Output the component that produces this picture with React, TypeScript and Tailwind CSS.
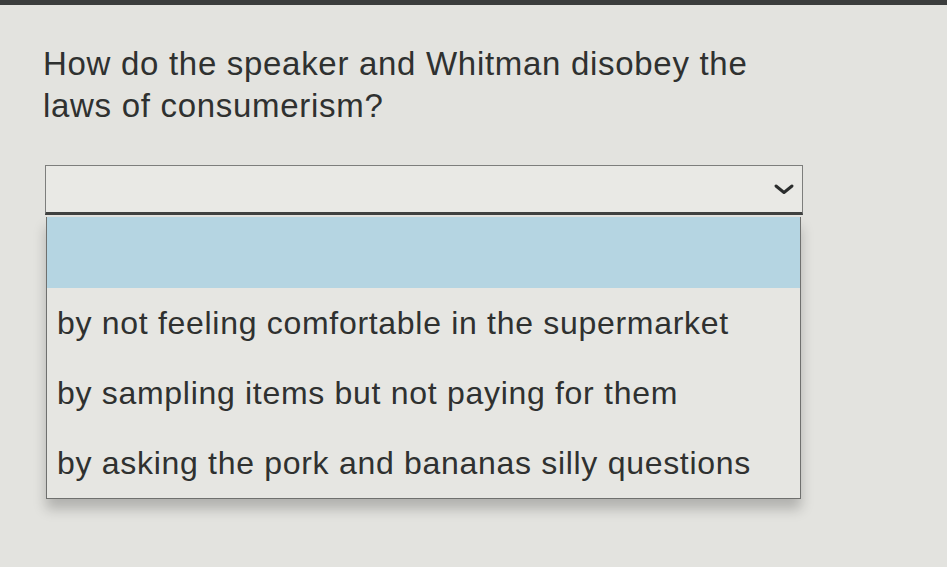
import { useState } from "react";

const options = [
  "",
  "by not feeling comfortable in the supermarket",
  "by sampling items but not paying for them",
  "by asking the pork and bananas silly questions",
];

export default function App() {
  const [selected] = useState(0);

  return (
    <div
      className="w-[947px] h-[567px] overflow-hidden bg-[#e3e3df] text-[#2f3130]"
      style={{ fontFamily: '"Liberation Sans", Arial, sans-serif' }}
    >
      {/* top edge of the window */}
      <div className="h-[5px] bg-[#3b3d3d]" />

      <div className="pl-[43px] pt-[38px]">
        <p className="w-[730px] text-[33px] leading-[42px] tracking-[0.7px]">
          How do the speaker and Whitman disobey the laws of consumerism?
        </p>

        {/* select */}
        <div className="mt-[38px] ml-[2px] w-[758px]">
          <div className="h-[50px] flex items-center justify-end pr-[6px] bg-[#e9e9e5] border border-[#7d7e7c] border-b-[3px] border-b-[#3f4140]">
            <svg width="24" height="16" viewBox="0 0 24 16" fill="none">
              <path
                d="M4 5l8 6.5 8-6.5"
                stroke="#2b2d2d"
                strokeWidth="3"
                strokeLinecap="round"
                strokeLinejoin="round"
              />
            </svg>
          </div>

          {/* open list */}
          <ul className="ml-[1px] w-[755px] bg-[#e6e6e2] border border-[#6f706e] border-t-0 shadow-[0_10px_12px_rgba(0,0,0,0.22)]">
            {options.map((opt, i) => (
              <li
                key={i}
                className={
                  i === selected
                    ? "h-[71px] mt-[2px] bg-[#b5d5e2]"
                    : "h-[70px] flex items-center pl-[10px] text-[32px] tracking-[0.7px]"
                }
              >
                {opt}
              </li>
            ))}
          </ul>
        </div>
      </div>
    </div>
  );
}
